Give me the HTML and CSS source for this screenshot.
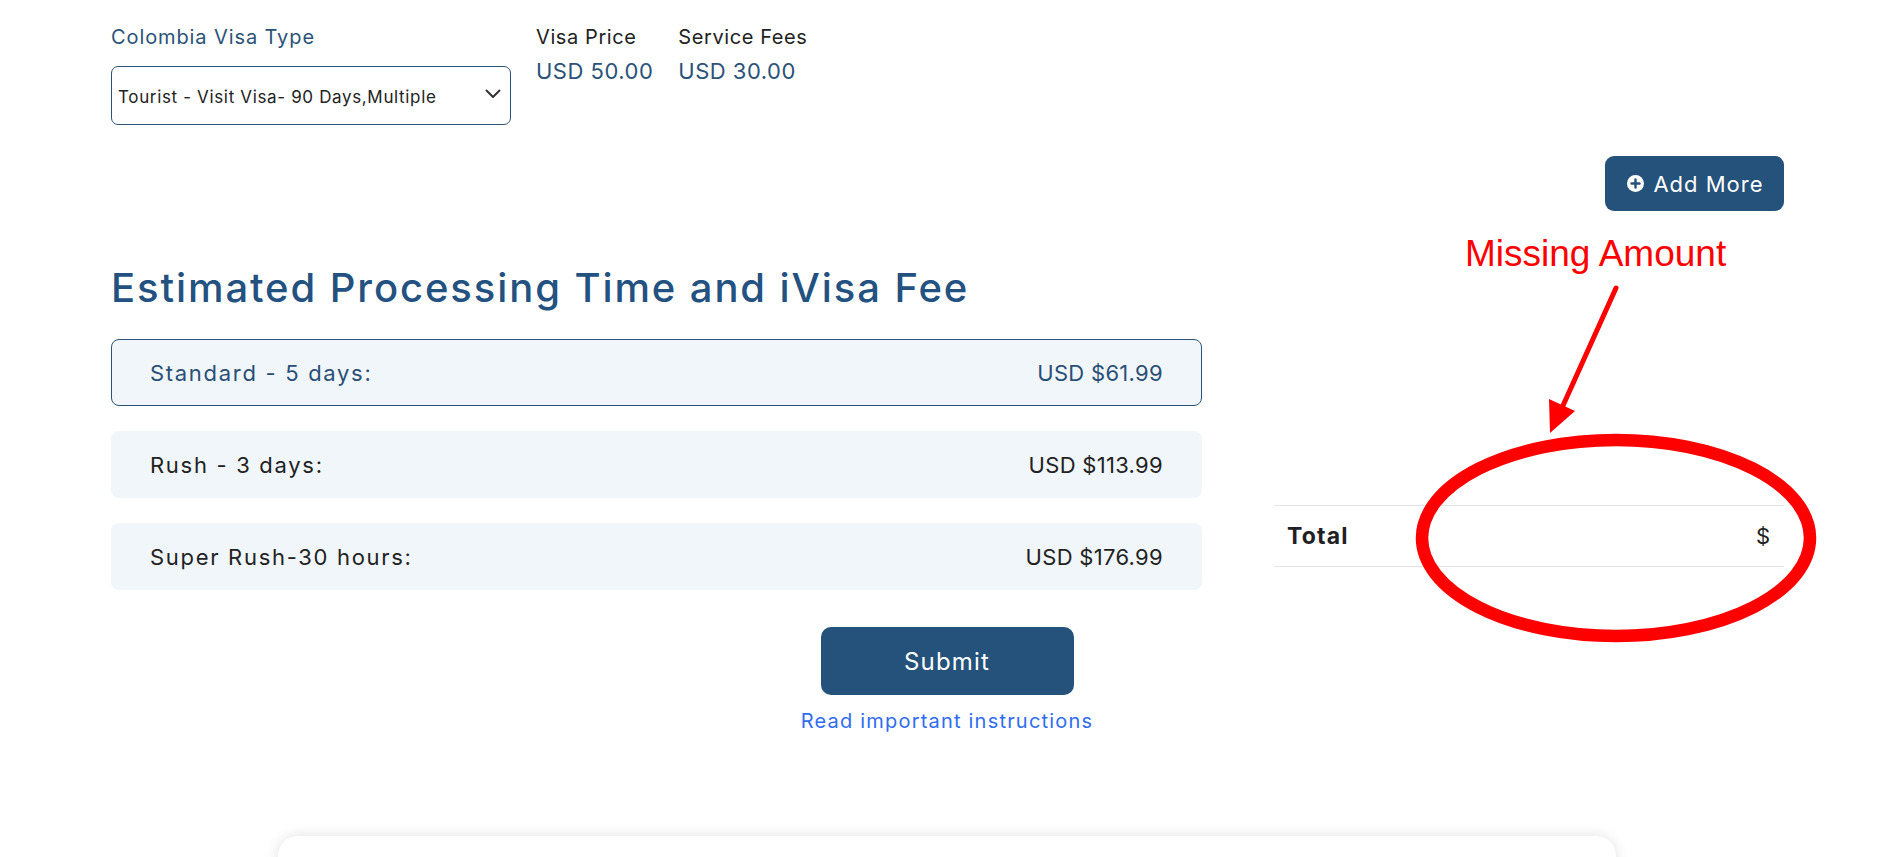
FILE: index.html
```html
<!DOCTYPE html>
<html lang="en">
<head>
<meta charset="utf-8">
<title>Colombia Visa</title>
<link rel="stylesheet" href="styles.css">
</head>
<body>
<div class="page">
  <div class="container">
    <div class="top-row">
      <div class="field visa-type">
        <div class="field-label">Colombia Visa Type</div>
        <div class="select">
          <span class="select-text">Tourist - Visit Visa- 90 Days,Multiple</span>
          <svg class="chevron" width="16" height="10" viewBox="0 0 16 10"><path d="M1.5 1.5 L8 8 L14.5 1.5" fill="none" stroke="#333" stroke-width="2" stroke-linecap="round" stroke-linejoin="round"/></svg>
        </div>
      </div>
      <div class="field price">
        <div class="price-label">Visa Price</div>
        <div class="price-value">USD 50.00</div>
      </div>
      <div class="field price">
        <div class="price-label">Service Fees</div>
        <div class="price-value">USD 30.00</div>
      </div>
    </div>

    <div class="add-row">
      <button class="add-btn">
        <svg class="plus-icon" width="17" height="17" viewBox="0 0 17 17"><circle cx="8.5" cy="8.5" r="8.5" fill="#fff"/><path d="M8.5 4.5 V12.5 M4.5 8.5 H12.5" stroke="#24527a" stroke-width="2.4" stroke-linecap="round"/></svg>
        <span>Add More</span>
      </button>
    </div>

    <div class="main-row">
      <div class="left-col">
        <h2 class="section-title">Estimated Processing Time and iVisa Fee</h2>
        <div class="options">
          <div class="option selected"><span class="opt-name">Standard - 5 days:</span><span class="opt-price">USD $61.99</span></div>
          <div class="option"><span class="opt-name">Rush - 3 days:</span><span class="opt-price">USD $113.99</span></div>
          <div class="option"><span class="opt-name">Super Rush-30 hours:</span><span class="opt-price">USD $176.99</span></div>
        </div>
      </div>
      <div class="right-col">
        <div class="total-row">
          <span class="total-label">Total</span>
          <span class="total-value">$</span>
        </div>
      </div>
    </div>
  </div>

  <div class="submit-area">
    <button class="submit-btn">Submit</button>
    <a class="instructions" href="#">Read important instructions</a>
  </div>

  <div class="bottom-card"></div>

  <div class="annotation">
    <div class="annotation-text">Missing Amount</div>
    <svg class="annotation-svg" width="1894" height="857" viewBox="0 0 1894 857">
      <line x1="1616" y1="288" x2="1561" y2="410" stroke="#ff0000" stroke-width="5" stroke-linecap="round"/>
      <polygon points="1550,433 1549,399 1575,411" fill="#ff0000"/>
      <ellipse cx="1616" cy="538" rx="194" ry="98" fill="none" stroke="#ff0000" stroke-width="12.5"/>
    </svg>
  </div>
</div>
</body>
</html>
```

FILE: styles.css
```css
* { box-sizing: border-box; }
html, body { margin: 0; padding: 0; background: #fff; }
body {
  font-family: Inter, "Noto Sans", sans-serif;
  color: #222;
  width: 1894px;
  height: 857px;
  overflow: hidden;
}
.page { position: relative; width: 1894px; height: 857px; }

.container { padding: 23px 0 0 111px; width: 1784px; }

.top-row { display: flex; gap: 25px; align-items: flex-start; }
.visa-type { width: 400px; }
.field-label {
  font-size: 20px;
  line-height: 28px;
  letter-spacing: 0.9px;
  color: #2b5278;
}
.select {
  margin-top: 15px;
  height: 59px;
  border: 1px solid #2b5278;
  border-radius: 7px;
  display: flex;
  align-items: center;
  justify-content: space-between;
  padding: 0 9px 0 6px;
}
.select-text { font-size: 17px; letter-spacing: 0.65px; color: #222; margin-top: 3px; }
.chevron { margin-top: -3px; }

.price-label { font-size: 20px; line-height: 28px; letter-spacing: 0.6px; color: #222; }
.price-value { font-size: 22px; line-height: 30px; letter-spacing: 0.5px; color: #2b5278; margin-top: 5px; }

.add-row { display: flex; justify-content: flex-end; margin-top: 31px; }
.add-btn {
  height: 55px;
  width: 179px;
  border: none;
  border-radius: 9px;
  background: #24527a;
  color: #fff;
  font-family: Inter, "Noto Sans", sans-serif;
  font-size: 22px;
  letter-spacing: 1px;
  display: flex;
  align-items: center;
  justify-content: center;
  gap: 9px;
  padding: 0 0 0 2px;
}

.main-row { display: flex; gap: 72px; margin-top: 53px; }
.left-col { width: 1091px; }
.right-col { width: 510px; padding-top: 241px; }

.section-title {
  margin: 0;
  font-size: 40px;
  line-height: 48px;
  font-weight: 500;
  color: #235180;
  letter-spacing: 1.9px;
}
.options { margin-top: 27px; display: flex; flex-direction: column; gap: 25px; }
.option {
  height: 67px;
  background: #f1f6fa;
  border: 1px solid transparent;
  border-radius: 8px;
  display: flex;
  align-items: center;
  justify-content: space-between;
  padding: 0 38px 0 38px;
  font-size: 22px;
  color: #222;
}
.opt-name { letter-spacing: 1.7px; }
.opt-price { letter-spacing: 0.3px; }
.option.selected { border-color: #2b5278; color: #2a4f76; }

.total-row {
  height: 62px;
  border-top: 1px solid #e1e3e6;
  border-bottom: 1px solid #e1e3e6;
  display: flex;
  align-items: center;
  justify-content: space-between;
  padding: 0 14px 0 13px;
}
.total-label { font-weight: 700; font-size: 23px; letter-spacing: 1.2px; color: #1d2125; }
.total-value { font-size: 22px; color: #222; }

.submit-area {
  display: flex;
  flex-direction: column;
  align-items: center;
  margin-top: 37px;
}
.submit-btn {
  width: 253px;
  height: 68px;
  border: none;
  border-radius: 10px;
  background: #24527a;
  color: #fff;
  font-family: Inter, "Noto Sans", sans-serif;
  font-size: 24px;
  letter-spacing: 1.2px;
}
.instructions {
  margin-top: 12px;
  font-size: 20px;
  line-height: 28px;
  letter-spacing: 1.2px;
  color: #2f6cf2;
  text-decoration: none;
}

.bottom-card {
  position: absolute;
  left: 278px;
  top: 836px;
  width: 1338px;
  height: 200px;
  background: #fff;
  border-radius: 20px;
  box-shadow: 0 0 14px rgba(0, 0, 0, 0.12);
}

.annotation { position: absolute; inset: 0; pointer-events: none; }
.annotation-svg { position: absolute; left: 0; top: 0; }
.annotation-text {
  position: absolute;
  left: 1465px;
  top: 234px;
  font-family: "Liberation Sans", Arial, sans-serif;
  font-size: 37px;
  line-height: 40px;
  color: #ff0000;
}
```
